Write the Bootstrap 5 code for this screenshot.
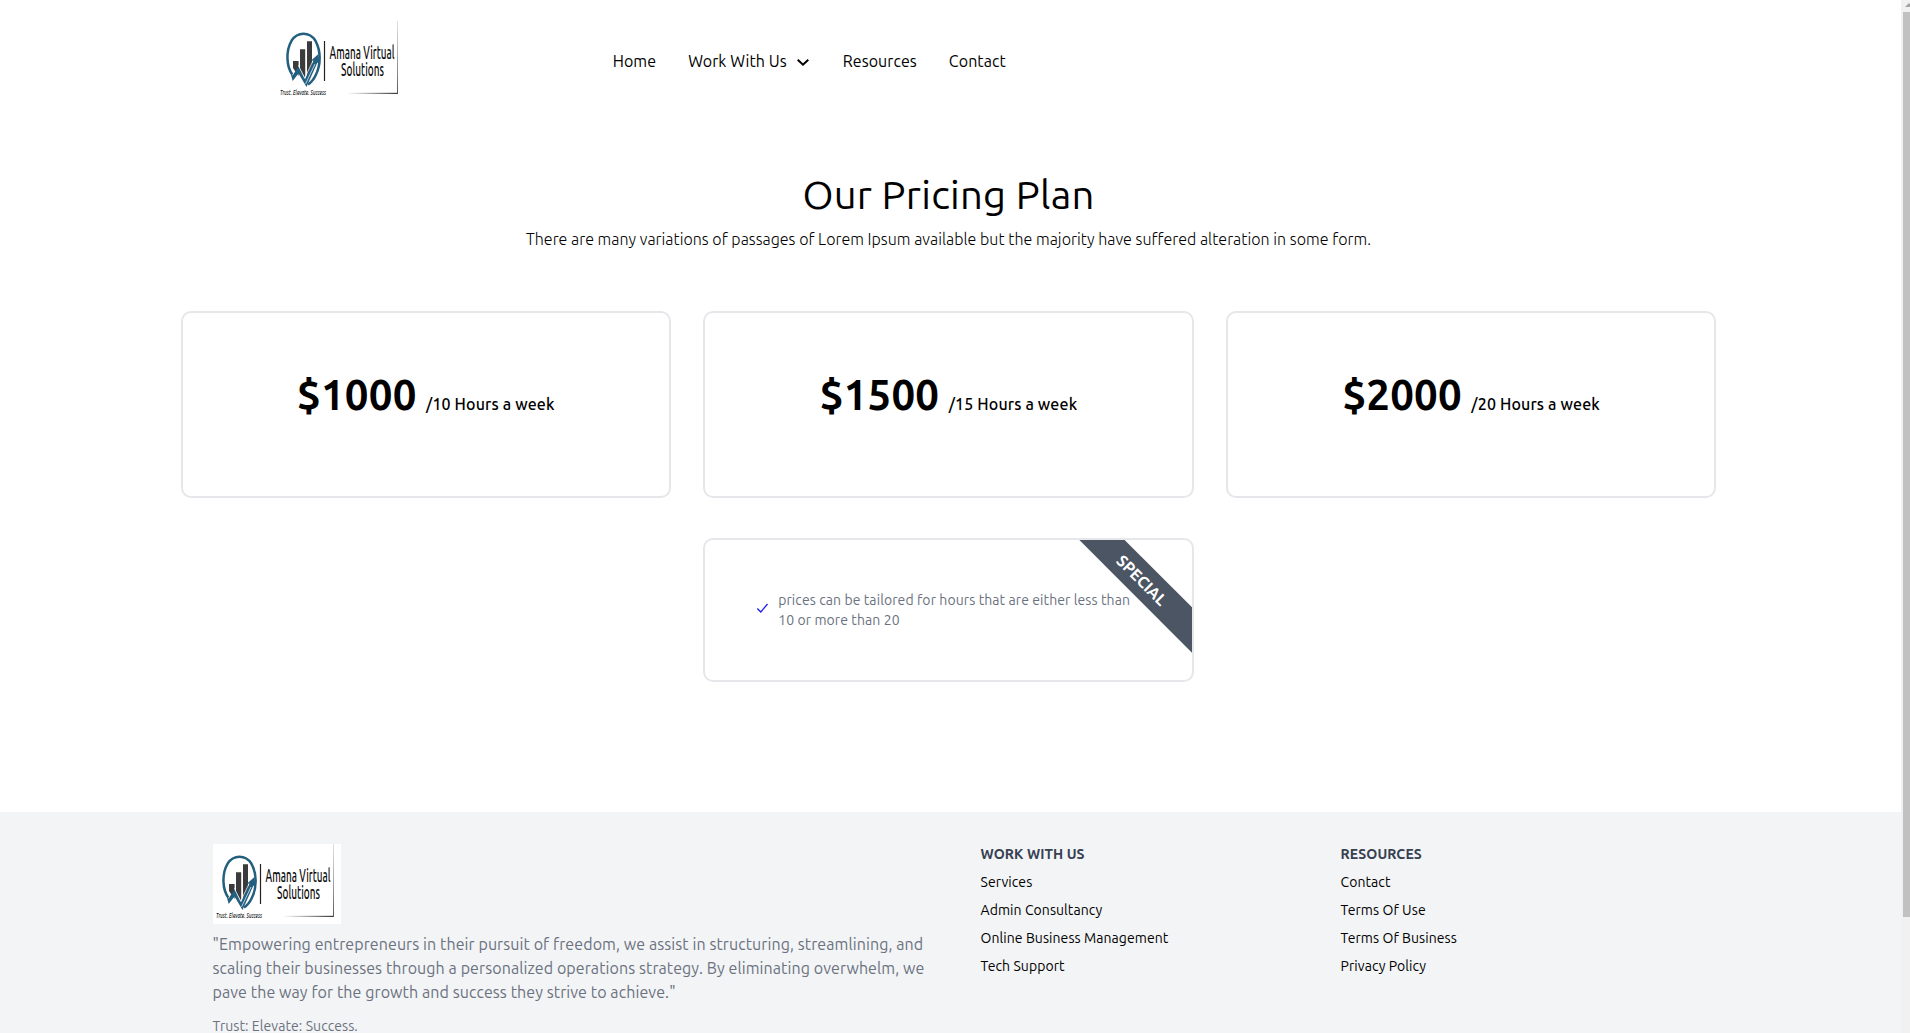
<!DOCTYPE html>
<html lang="en">
<head>
<meta charset="utf-8">
<meta name="viewport" content="width=device-width, initial-scale=1">
<title>Amana Virtual Solutions</title>
<link href="https://cdn.jsdelivr.net/npm/bootstrap@5.3.0/dist/css/bootstrap.min.css" rel="stylesheet">
<style>
  body { font-family: Ubuntu, "Noto Sans", sans-serif; font-size: 16px; line-height: 24px; letter-spacing: .075px; color: #000; height: 1033px; }
  a { color: #000; text-decoration: none; }
  .page-view { width: 1901px; }
  .site-header { padding: 21px 0 0 277px; }
  .logo { width: 128px; height: 80px; display: block; background: #fff; }
  .main-menu { margin-left: 207.7px; gap: 32px; }
  .pricing { width: 1536px; margin: 70px 0 0 180.5px; }
  .pricing h1 { font-size: 40px; line-height: 48px; font-weight: 400; letter-spacing: .25px; margin-bottom: 8px; }
  .intro { font-weight: 300; letter-spacing: .03px; margin-bottom: 60px; }
  .plans { --bs-gutter-x: 32px; --bs-gutter-y: 40px; }
  .plan { border: 2px solid #e5e7eb; border-radius: 10px; overflow: hidden; }
  .plan-price { height: 187px; padding-top: 58px; }
  .amount { font-size: 42px; line-height: 48px; font-weight: 700; letter-spacing: .2px; }
  .period { font-weight: 500; letter-spacing: .14px; margin-left: 9.5px; }
  .plan-note { padding: 50px 48px; color: #6b7280; font-size: 14px; line-height: 20px; gap: 8px; }
  .note-text { letter-spacing: .09px; }
  .ribbon { position: absolute; right: -50.2px; top: 24px; width: 200px; height: 32px; line-height: 32px; transform: rotate(45deg); background: #4b5563; color: #fff; font-size: 16px; font-weight: 700; letter-spacing: 0; }
  .site-footer { margin-top: 130px; padding: 32px 0 0 212.5px; background: #f3f4f6; flex: 1; font-size: 14px; line-height: 20px; }
  .about { width: 768px; color: #6b7280; }
  .about p { font-size: 16px; line-height: 24px; margin: 8px 0 12px; letter-spacing: .09px; }
  .link-col { width: 360px; gap: 8px; }
  .link-col h2 { font-size: 14px; line-height: 20px; font-weight: 700; color: #374151; letter-spacing: .1px; }
  .scroll-track { width: 9px; background: #f1f1f1; padding: 3px 0 0 2px; overflow: hidden; }
  .scroll-thumb { height: 905px; background: #c1c1c1; margin-top: 4px; }
</style>
</head>
<body class="bg-white d-flex overflow-hidden">
<svg width="0" height="0" class="position-absolute">
  <defs>
    <linearGradient id="fadeX"><stop offset="0" stop-color="#444" stop-opacity="0"/><stop offset="1" stop-color="#333"/></linearGradient>
    <linearGradient id="fadeY" x2="0" y2="1"><stop offset="0" stop-color="#999" stop-opacity=".3"/><stop offset="1" stop-color="#555"/></linearGradient>
    <symbol id="brand" viewBox="0 0 128 80">
      <g fill="#3b3b3d"><path d="M16 40h5.600v15L16 47zM23 28.300h5.200V57L23 48zM30 20.200h5V48l-5 9z"/></g>
      <path d="M15.300 53.500C9.500 46 8.500 30 14.500 19.800c6-9.300 18-9.300 24 0 5.500 10 5.500 24 .3 34.200-2 4.300-5 7.700-7.800 9.500" fill="none" stroke="#235f7e" stroke-width="2.500"/>
      <path d="M12.500 48.500l3.200 6 5.800-9.500 6.600 13 8.300-18.500-2.800.5 7.800-7 1.200 11-2.200-2.500L29.500 66 21.500 52.500l-5.800 7.500z" fill="#235f7e"/>
      <path d="M28.500 63l9.500-20M21.400 44.300l6.300 13 8-17" fill="none" stroke="#fff" stroke-width=".7"/>
      <path d="M47.500 20v40" stroke="#222" stroke-width="1.200"/>
      <g fill="#0c0c0c" font-family="Ubuntu, 'Noto Sans', sans-serif">
        <text x="52.500" y="38.300" font-size="18" font-weight="500" textLength="65" lengthAdjust="spacingAndGlyphs">Amana Virtual</text>
        <text x="64" y="54.700" font-size="18" font-weight="500" textLength="43" lengthAdjust="spacingAndGlyphs">Solutions</text>
        <text x="3" y="73.500" font-size="8" font-style="italic" font-weight="500" textLength="46" lengthAdjust="spacingAndGlyphs">Trust. Elevate. Success</text>
      </g>
      <rect x="70" y="71.800" width="51" height="1.200" fill="url(#fadeX)"/>
      <rect x="120" y="0" width="1" height="73" fill="url(#fadeY)"/>
    </symbol>
  </defs>
</svg>

<div class="page-view d-flex flex-column flex-shrink-0">
  <header class="site-header d-flex align-items-center">
    <a href="#"><svg class="logo"><use href="#brand"/></svg></a>
    <nav class="main-menu d-flex">
      <a href="#">Home</a>
      <a href="#" class="d-flex align-items-center gap-2">Work With Us
        <svg width="16" height="16" viewBox="0 0 16 16" fill="none" stroke="#000" stroke-width="2"><path d="M2.700 6.700L8 11.700l5.300-5"/></svg>
      </a>
      <a href="#">Resources</a>
      <a href="#">Contact</a>
    </nav>
  </header>

  <main class="pricing">
    <h1 class="text-center">Our Pricing Plan</h1>
    <p class="intro text-center">There are many variations of passages of Lorem Ipsum available but the majority have suffered alteration in some form.</p>
    <div class="row plans justify-content-center">
      <div class="col-4"><div class="plan plan-price text-center"><span class="amount">$1000</span><span class="period">/10 Hours a week</span></div></div>
      <div class="col-4"><div class="plan plan-price text-center"><span class="amount">$1500</span><span class="period">/15 Hours a week</span></div></div>
      <div class="col-4"><div class="plan plan-price text-center"><span class="amount">$2000</span><span class="period">/20 Hours a week</span></div></div>
      <div class="col-4">
        <div class="plan plan-note position-relative d-flex align-items-center">
          <svg class="flex-shrink-0 mb-1" width="17" height="17" viewBox="0 0 17 17" fill="none" stroke="#1d1df2" stroke-width="1.300"><path d="M4.300 8.500l3.500 3.500L14.500 4"/></svg>
          <span class="note-text">prices can be tailored for hours that are either less than<br>10 or more than 20</span>
          <span class="ribbon text-center">SPECIAL</span>
        </div>
      </div>
    </div>
  </main>

  <footer class="site-footer d-flex">
    <div class="about">
      <svg class="logo"><use href="#brand"/></svg>
      <p>"Empowering entrepreneurs in their pursuit of freedom, we assist in structuring, streamlining, and<br>scaling their businesses through a personalized operations strategy. By eliminating overwhelm, we<br>pave the way for the growth and success they strive to achieve."</p>
      <div>Trust: Elevate: Success.</div>
    </div>
    <div class="link-col d-flex flex-column">
      <h2 class="m-0">WORK WITH US</h2>
      <a href="#">Services</a>
      <a href="#">Admin Consultancy</a>
      <a href="#">Online Business Management</a>
      <a href="#">Tech Support</a>
    </div>
    <div class="link-col d-flex flex-column">
      <h2 class="m-0">RESOURCES</h2>
      <a href="#">Contact</a>
      <a href="#">Terms Of Use</a>
      <a href="#">Terms Of Business</a>
      <a href="#">Privacy Policy</a>
    </div>
  </footer>
</div>
<div class="scroll-track flex-shrink-0">
  <svg class="d-block" width="7" height="5" viewBox="0 0 7 5"><path d="M2 4l4-4 1 1v3z" fill="#a3a3a3"/></svg>
  <div class="scroll-thumb"></div>
</div>
<script src="https://cdn.jsdelivr.net/npm/bootstrap@5.3.0/dist/js/bootstrap.bundle.min.js"></script>
</body>
</html>
